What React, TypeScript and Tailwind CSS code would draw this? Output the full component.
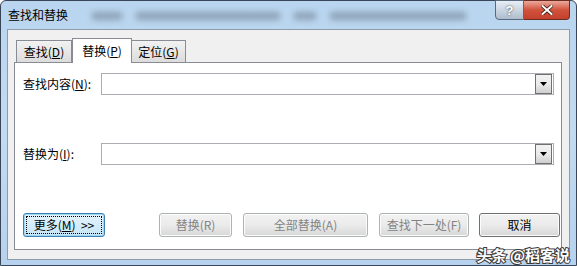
import React from "react";

const cjk = { fontFamily: '"Noto Sans CJK SC", "Microsoft YaHei", sans-serif' };

function Combo() {
  return (
    <div className="flex-1 h-[22px] border border-[#abadb3] bg-white flex justify-end items-center pr-[1px]">
      <div className="w-[17px] h-[20px] border border-[#707070] bg-gradient-to-b from-[#f2f2f2] via-[#ebebeb] to-[#cfcfcf] flex items-center justify-center">
        <svg width="7" height="4" viewBox="0 0 7 4"><path d="M0 0H7L3.5 4Z" fill="#000" /></svg>
      </div>
    </div>
  );
}

function Btn({ children, w, disabled, focused }: { children: React.ReactNode; w: string; disabled?: boolean; focused?: boolean }) {
  if (focused) {
    return (
      <div className={`${w} shrink-0 h-[24px] rounded-[3px] border border-[#3c7fb1] bg-gradient-to-b from-[#e5f4fc] to-[#c4e5f6] p-[2px] shadow-[inset_0_0_0_1px_#9fd7f5]`}>
        <div className="w-full h-full border border-dotted border-black flex items-center justify-center text-[12px] text-black leading-none">
          {children}
        </div>
      </div>
    );
  }
  return (
    <div
      className={`${w} shrink-0 h-[24px] rounded-[3px] border ${disabled ? "border-[#adb2b5] text-[#838383]" : "border-[#707070] text-black"} bg-gradient-to-b from-[#f2f2f2] via-[#ebebeb] to-[#d7d7d7] shadow-[inset_0_0_0_1px_#fcfcfc] flex items-center justify-center text-[12px] leading-none`}
    >
      {children}
    </div>
  );
}

export default function App() {
  return (
    <div className="w-[577px] h-[266px] relative overflow-hidden" style={cjk}>
      <div className="w-full h-full rounded-t-[6px] border border-[#3a4658] bg-gradient-to-b from-[#b9d5ef] via-[#c2dbf2] to-[#b6d2ee] flex flex-col">
        {/* title bar */}
        <div className="h-[28px] flex items-start relative">
          <div className="pl-[7px] pt-[5px] text-[12px] text-black leading-[18px] flex items-center">查找和替换</div>
          <div className="flex items-center gap-[14px] pt-[11px] pl-[24px] opacity-60">
            <div className="w-[30px] h-[8px] bg-[#6e7f90] blur-[3px]" />
            <div className="w-[144px] h-[8px] bg-[#6e7f90] blur-[3px]" />
            <div className="w-[22px] h-[8px] bg-[#6e7f90] blur-[3px]" />
            <div className="w-[136px] h-[8px] bg-[#6e7f90] blur-[3px]" />
          </div>
          <div className="absolute right-[6px] top-[-1px] flex">
            <div className="w-[29px] h-[20px] rounded-bl-[4px] border border-[#5a6a7e] bg-gradient-to-b from-[#e8eef5] via-[#cbd6e2] to-[#aebdcc] flex items-center justify-center text-white text-[13px] font-bold leading-none [text-shadow:0_0_2px_#333]" style={{ fontFamily: '"Liberation Sans", sans-serif' }}>?</div>
            <div className="w-[46px] h-[20px] rounded-br-[4px] border border-l-0 border-[#6d2c22] bg-gradient-to-b from-[#e9a99c] via-[#d0513c] to-[#c4412c] flex items-center justify-center">
              <svg width="12" height="10" viewBox="0 0 12 10"><path d="M1.5 1L10.5 9M10.5 1L1.5 9" stroke="#3b1a14" strokeWidth="3.6" strokeLinecap="square" /><path d="M1.5 1L10.5 9M10.5 1L1.5 9" stroke="#fff" strokeWidth="2" strokeLinecap="square" /></svg>
            </div>
          </div>
        </div>
        {/* client */}
        <div className="mx-[6px] h-[231px] border border-[#8d9bab] bg-[#f0f0f0] pl-[6px] pr-[7px] pt-[8px] flex flex-col">
          {/* tabs */}
          <div className="flex items-end h-[24px] pl-[2px] relative z-10">
            <div className="w-[56px] h-[22px] border border-b-0 border-[#898c95] bg-gradient-to-b from-[#f2f2f2] to-[#dcdcdc] text-[12px] flex items-center justify-center leading-none">查找(<span className="underline">D</span>)</div>
            <div className="w-[60px] h-[25px] mb-[-1px] border border-b-0 border-[#898c95] bg-white text-[12px] flex items-center justify-center leading-none">替换(<span className="underline">P</span>)</div>
            <div className="w-[54px] h-[22px] border border-b-0 border-l-0 border-[#898c95] bg-gradient-to-b from-[#f2f2f2] to-[#dcdcdc] text-[12px] flex items-center justify-center leading-none">定位(<span className="underline">G</span>)</div>
          </div>
          <div className="h-[188px] border border-[#898c95] bg-white pl-[8px] pr-[7px] pt-[10px] flex flex-col">
            <div className="flex items-center h-[22px]">
              <div className="w-[78px] text-[12px] leading-none">查找内容(<span className="underline">N</span>):</div>
              <Combo />
            </div>
            <div className="flex items-center h-[22px] mt-[48px]">
              <div className="w-[78px] text-[12px] leading-none">替换为(<span className="underline">I</span>):</div>
              <Combo />
            </div>
            <div className="flex items-center h-[24px] mt-[48px] mr-[-7px]">
              <Btn w="w-[82px]" focused>更多(<span className="underline">M</span>)&nbsp;&nbsp;&gt;&gt;</Btn>
              <div className="ml-[54px] shrink-0"><Btn w="w-[73px]" disabled>替换(R)</Btn></div>
              <div className="ml-[11px] shrink-0"><Btn w="w-[125px]" disabled>全部替换(A)</Btn></div>
              <div className="ml-[11px] shrink-0"><Btn w="w-[90px]" disabled>查找下一处(F)</Btn></div>
              <div className="ml-[10px] shrink-0"><Btn w="w-[81px]">取消</Btn></div>
            </div>
          </div>
        </div>
      </div>
      <div className="absolute right-[7px] bottom-[4px] text-[15px] leading-none text-white font-bold [-webkit-text-stroke:2px_#3a3a3a] [paint-order:stroke_fill]">头条 @稻客说</div>
    </div>
  );
}
